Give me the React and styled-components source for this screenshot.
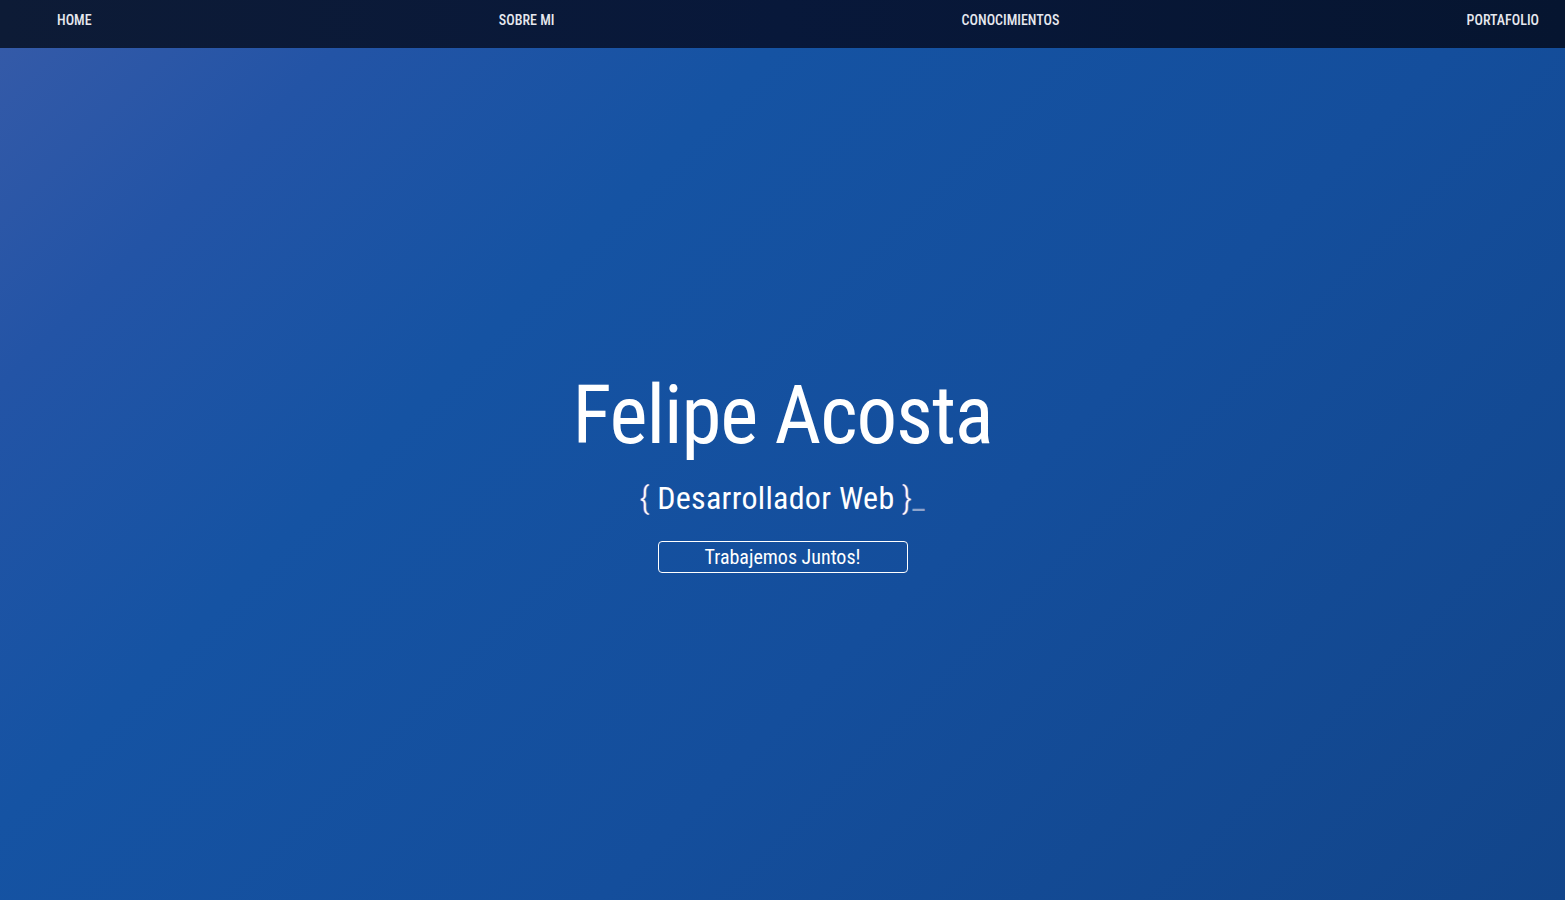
import React from 'react';
import styled, { createGlobalStyle, keyframes } from 'styled-components';

const GlobalStyle = createGlobalStyle`
    html, body {
        margin: 0;
        padding: 0;
        height: 100%;
    }
    body {
        font-family: "Roboto", "Open Sans", sans-serif;
        font-stretch: condensed;
        color: #fff;
        background: #12458a;
    }
    #root {
        height: 100%;
    }
`;

const blink = keyframes`
    0%, 49% { opacity: 1; }
    50%, 100% { opacity: 0; }
`;

const Page = styled.div`
    height: 100vh;
    display: flex;
    flex-direction: column;
`;

const NavBar = styled.nav`
    height: 48px;
    flex-shrink: 0;
    background: linear-gradient(90deg, #0d1b36 0%, #08183a 50%, #061530 100%);
    display: flex;
    align-items: center;
    justify-content: space-between;
    padding: 0 26px 0 57px;
`;

const NavLink = styled.a`
    color: #e6e8ef;
    font-size: 14px;
    font-weight: 500;
    text-transform: uppercase;
    text-decoration: none;
    margin-top: -9px;
    cursor: pointer;
`;

const Hero = styled.section`
    flex: 1;
    display: flex;
    flex-direction: column;
    align-items: center;
    justify-content: center;
    background: linear-gradient(135deg, #345aa8 0%, #2354a6 14%, #1553a3 32%, #144e9c 60%, #12458a 100%);
`;

const Title = styled.h1`
    margin: 0;
    font-size: 81px;
    font-weight: normal;
    line-height: 1;
    letter-spacing: -1.1px;
`;

const Subtitle = styled.h2`
    margin: 26px 0 0;
    font-size: 32px;
    font-weight: normal;
    line-height: 1;
    letter-spacing: 0.3px;
`;

const Brace = styled.span`
    font-weight: 300;
    text-shadow: -1px 0 rgba(255, 110, 170, 0.55), 1px 0 rgba(140, 230, 255, 0.35);
`;

const Cursor = styled.span`
    color: #8ea4cc;
    animation: ${blink} 1s steps(1) infinite;
`;

const Button = styled.button`
    margin-top: 27px;
    width: 250px;
    height: 32px;
    background: transparent;
    border: 1px solid #fff;
    border-radius: 4px;
    color: #fff;
    font-family: inherit;
    font-stretch: inherit;
    font-size: 20px;
    cursor: pointer;
`;

const links = ['Home', 'Sobre mi', 'Conocimientos', 'Portafolio'];

export default function App() {
    return (
        <Page>
            <GlobalStyle />
            <NavBar>
                {links.map(link => <NavLink key={link}>{link}</NavLink>)}
            </NavBar>
            <Hero>
                <Title>Felipe Acosta</Title>
                <Subtitle>
                    <Brace>{'{'}</Brace> Desarrollador Web <Brace>{'}'}</Brace><Cursor>_</Cursor>
                </Subtitle>
                <Button>Trabajemos Juntos!</Button>
            </Hero>
        </Page>
    );
}
